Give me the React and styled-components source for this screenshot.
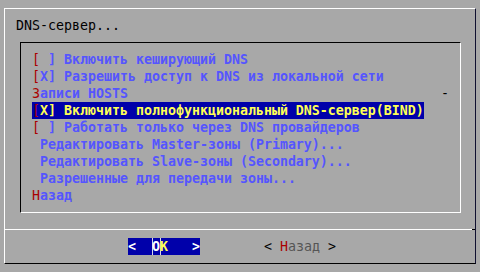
import React from "react";
import styled, { createGlobalStyle } from "styled-components";

const GlobalStyle = createGlobalStyle`
  html, body {
    margin: 0;
    padding: 0;
    background: #a8a8a8;
  }
  body {
    font-family: "DejaVu Sans Mono", "Liberation Mono", monospace;
    font-size: 13.29px;
    line-height: 17px;
  }
`;

const Screen = styled.div`
  width: 480px;
  height: 272px;
  box-sizing: border-box;
  padding: 8px 0 0 4px;
  background: #a8a8a8;
  overflow: hidden;
`;

const Dialog = styled.div`
  width: 472px;
  height: 256px;
  box-sizing: border-box;
  border-style: solid;
  border-width: 1px;
  border-color: #ffffff #101030 #000000 #ffffff;
  display: flex;
  flex-direction: column;
`;

const Title = styled.div`
  margin: 8px 0 0 11px;
  height: 17px;
  color: #000000;
  white-space: pre;
`;

const Panel = styled.div`
  margin: 8px 0 0 15px;
  width: 441px;
  height: 171px;
  box-sizing: border-box;
  border-style: solid;
  border-width: 1px;
  border-color: #000000 #ffffff #ffffff #000000;
  padding: 8px 11px;
`;

const Item = styled.div`
  display: flex;
  justify-content: space-between;
  height: 17px;
  white-space: pre;
`;

const Label = styled.span`
  background: ${(p) => (p.$active ? "#0000aa" : "transparent")};
`;

const Key = styled.span`
  color: #aa0000;
`;

const Txt = styled.span`
  color: ${(p) => (p.$active ? "#ffff55" : "#5555ff")};
  font-weight: bold;
`;

const Marker = styled.span`
  color: #000000;
`;

const Separator = styled.div`
  position: relative;
  margin-top: 16px;
  height: 1px;
  background: #ffffff;

  &::after {
    content: "";
    position: absolute;
    right: 0;
    top: 0;
    width: 3px;
    height: 1px;
    background: #000000;
  }
`;

const Buttons = styled.div`
  display: flex;
  gap: 64px;
  margin-top: 8px;
  padding-left: 123px;
  height: 17px;
  white-space: pre;
`;

const Button = styled.div`
  display: flex;
  width: 72px;
  height: 17px;
  background: ${(p) => (p.$active ? "#0000aa" : "transparent")};
  color: ${(p) => (p.$active ? "#ffffff" : "#000000")};
  font-weight: ${(p) => (p.$active ? "bold" : "normal")};
`;

const Glyph = styled.span`
  color: ${(p) => p.$color || "inherit"};
  box-shadow: ${(p) => (p.$cursor ? "inset 1px 0 0 #d8d8e8" : "none")};
`;

const items = [
  { key: "[", text: " ] Включить кеширующий DNS" },
  { key: "[", text: "X] Разрешить доступ к DNS из локальной сети" },
  { key: "З", text: "аписи HOSTS", marker: "-" },
  { key: "[", text: "X] Включить полнофункциональный DNS-сервер(BIND)", active: true },
  { key: "[", text: " ] Работать только через DNS провайдеров" },
  { key: " ", text: "Редактировать Master-зоны (Primary)..." },
  { key: " ", text: "Редактировать Slave-зоны (Secondary)..." },
  { key: " ", text: "Разрешенные для передачи зоны..." },
  { key: "Н", text: "азад" },
];

export default function App() {
  return (
    <Screen>
      <GlobalStyle />
      <Dialog>
        <Title>DNS-сервер...</Title>
        <Panel>
          {items.map((it, i) => (
            <Item key={i}>
              <Label $active={it.active}>
                <Key>{it.key}</Key>
                <Txt $active={it.active}>{it.text}</Txt>
              </Label>
              {it.marker && <Marker>{it.marker}</Marker>}
            </Item>
          ))}
        </Panel>
        <Separator />
        <Buttons>
          <Button $active>
            <Glyph>{"<  "}</Glyph>
            <Glyph $cursor>O</Glyph>
            <Glyph $cursor $color="#ffff55">K</Glyph>
            <Glyph>{"   >"}</Glyph>
          </Button>
          <Button>
            <Glyph>{"< "}</Glyph>
            <Glyph $color="#aa0000">Н</Glyph>
            <Glyph $color="#555555">азад</Glyph>
            <Glyph>{" >"}</Glyph>
          </Button>
        </Buttons>
      </Dialog>
    </Screen>
  );
}
